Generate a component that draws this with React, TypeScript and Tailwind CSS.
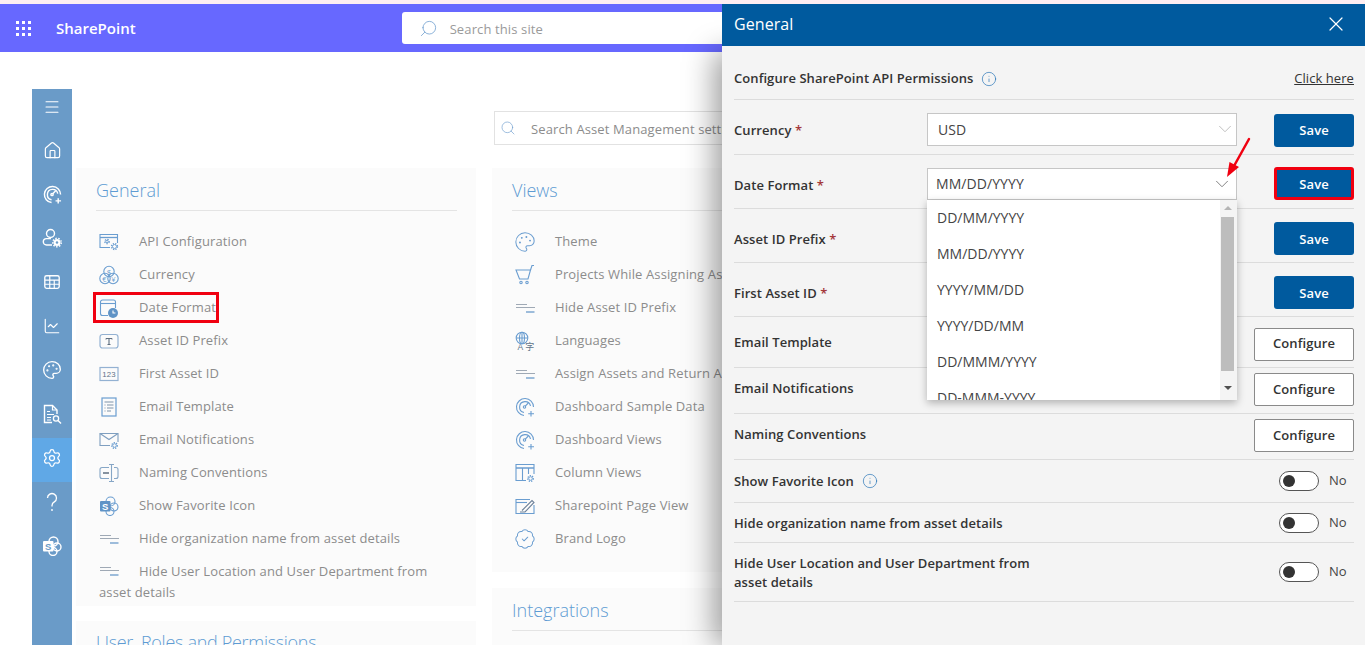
import React from "react";
import { Menu, House, ChartLine, Palette, Settings, BadgeCheck, X, ChevronDown, Search, Info } from "lucide-react";

type P = { className?: string };
const Svg = ({ className, children }: P & { children: React.ReactNode }) => (
  <svg viewBox="0 0 20 20" fill="none" stroke="currentColor" strokeWidth="1.100" className={className}>{children}</svg>
);
const MiniGear = ({ x, y, r = 2.2 }: { x: number; y: number; r?: number }) => (
  <g>
    <circle cx={x} cy={y} r={r + 1} strokeWidth="1.300" strokeDasharray="1.300 1.100" />
    <circle cx={x} cy={y} r={r} strokeWidth="0.900" />
  </g>
);
const IApi = ({ className }: P) => (
  <Svg className={className}>
    <path d="M18.500 11V2.500H1v13h10" /><path d="M1 5.500h17.500" strokeWidth="1.300" />
    <MiniGear x={8} y={9.500} r={1.200} /><MiniGear x={15.500} y={14.500} r={2} />
  </Svg>
);
const ICurrency = ({ className }: P) => (
  <Svg className={className}>
    <circle cx="10" cy="6.500" r="5.200" /><circle cx="6" cy="13.500" r="5.200" /><circle cx="14" cy="13.500" r="5.200" />
    <text x="10" y="9.500" fontSize="8" textAnchor="middle" fill="currentColor" stroke="none">$</text>
    <text x="5.500" y="16.500" fontSize="7.500" textAnchor="middle" fill="currentColor" stroke="none">€</text>
    <text x="14.500" y="16.500" fontSize="7.500" textAnchor="middle" fill="currentColor" stroke="none">¥</text>
  </Svg>
);
const IDate = ({ className }: P) => (
  <Svg className={className}>
    <path d="M9 17.500H3.500a2 2 0 0 1-2-2V4a2 2 0 0 1 2-2h11a2 2 0 0 1 2 2v6" /><path d="M1.500 5.500h15" />
    <circle cx="14" cy="15" r="5" fill="#5f93c6" stroke="none" /><path d="M14 12.500V15h2.400" stroke="#fff" />
  </Svg>
);
const IPrefix = ({ className }: P) => (
  <Svg className={className}>
    <rect x="1" y="3.500" width="18" height="13.500" rx="2.500" strokeWidth="1.200" stroke="#93b1d2" />
    <path d="M7 7.500h6M10 7.500v6M8.500 13.500h3M7 7.500v1M13 7.500v1" stroke="#5f6f80" />
  </Svg>
);
const I123 = ({ className }: P) => (
  <Svg className={className}>
    <rect x="1" y="3.500" width="18" height="13" strokeWidth="1.200" stroke="#93b1d2" />
    <text x="10" y="13.400" fontSize="7.800" textAnchor="middle" fill="#5f7388" stroke="none" fontFamily="Liberation Sans">123</text>
  </Svg>
);
const ITemplate = ({ className }: P) => (
  <Svg className={className}>
    <rect x="3" y="1" width="14" height="18" strokeWidth="1.200" />
    <path d="M5.500 5h9M5.500 8h1M8 8h6.500M5.500 11h1M8 11h6.500M5.500 14h1M8 14h4" stroke="#7f94aa" />
  </Svg>
);
const IMail = ({ className }: P) => (
  <Svg className={className}>
    <path d="M19 12V3.500H1v12h10" stroke="#7f9fc0" /><path d="M1 3.500l9 6 9-6" stroke="#7f9fc0" />
    <MiniGear x={15.500} y={15.500} r={1.800} />
  </Svg>
);
const INaming = ({ className }: P) => (
  <Svg className={className}>
    <path d="M10 4.500H3a2 2 0 0 0-2 2v7a2 2 0 0 0 2 2h7M15 4.500h2a2 2 0 0 1 2 2v7a2 2 0 0 1-2 2h-2" stroke="#86a6c6" />
    <path d="M10 1.500h5M12.500 1.500v17M10 18.500h5" stroke="#86a6c6" /><path d="M4 10h6" strokeWidth="1.500" stroke="#5f6f80" />
  </Svg>
);
const ISp = ({ className }: P) => (
  <Svg className={className}>
    <circle cx="11.500" cy="5.500" r="4.500" /><circle cx="15" cy="11" r="4" /><circle cx="11" cy="15.500" r="4" />
    <rect x="1" y="5" width="10.500" height="10.500" rx="1" fill="#5f93c6" stroke="none" />
    <text x="6.200" y="13.500" fontSize="9.500" fontWeight="700" textAnchor="middle" fill="#fff" stroke="none" fontFamily="Liberation Sans">S</text>
  </Svg>
);
const IHide = ({ className }: P) => (
  <svg viewBox="0 0 20 20" fill="none" strokeWidth="1.200" className={className}>
    <path d="M1 6.500h11M1 9.500h19" stroke="#9fa9b5" /><path d="M11 14h8.500" stroke="#5f93c6" />
  </svg>
);
const IGauge = ({ className, sw = 1.100 }: P & { sw?: number }) => (
  <Svg className={className}>
    <g strokeWidth={sw}>
      <path d="M9 18.500A8.500 8.500 0 1 1 18.500 10" /><path d="M9 15.500A5.500 5.500 0 1 1 15.500 9" />
      <circle cx="9.500" cy="10" r="1.200" /><path d="M10.300 9.200l3-3.200" />
      <path d="M16 14v5.500M13.200 16.700H19" />
    </g>
  </Svg>
);
const ILang = ({ className }: P) => (
  <Svg className={className}>
    <circle cx="7" cy="7" r="5.800" /><ellipse cx="7" cy="7" rx="2.500" ry="5.800" /><path d="M1.200 7h11.600M7 1.200v11.600" />
    <text x="5.500" y="19" fontSize="8.500" textAnchor="middle" fill="#5f7388" stroke="none" fontFamily="Liberation Sans">A</text>
    <text x="14.800" y="18.500" fontSize="9" textAnchor="middle" fill="#5f7388" stroke="none" fontFamily="Noto Sans CJK SC">字</text>
  </Svg>
);
const IColumns = ({ className }: P) => (
  <Svg className={className}>
    <path d="M19 11V1.500H1v16h10" /><path d="M1 5h18" strokeWidth="1.500" /><path d="M7.500 5v12.500M13.500 5v6" />
    <MiniGear x={15.500} y={15.500} r={1.800} />
  </Svg>
);
const IPage = ({ className }: P) => (
  <Svg className={className}>
    <path d="M19 9v8.500H1v-14h14" /><path d="M1 6.500h11" />
    <path d="M7 14.500l10-10 2 2-9 9.500H5" stroke="#6d8199" />
  </Svg>
);
const ICart = ({ className }: P) => (
  <Svg className={className}>
    <path d="M1 5h14.500L13 14H4.500z" /><path d="M15.500 5l1.500-4.500h2" />
    <circle cx="6" cy="17.500" r="1.200" /><circle cx="12" cy="17.500" r="1.200" />
  </Svg>
);
const UserGear = ({ className }: P) => (
  <Svg className={className}>
    <circle cx="8.500" cy="5.500" r="4" strokeWidth="1.400" /><path d="M10 17H4.500a3.200 3.200 0 0 1 0-6.400H9" strokeWidth="1.400" />
    <circle cx="15" cy="14.500" r="3.500" fill="currentColor" stroke="none" /><circle cx="15" cy="14.500" r="4.300" strokeWidth="1.400" strokeDasharray="1.500 1.500" />
    <circle cx="15" cy="14.500" r="1.200" fill="#6a9bc8" stroke="none" />
  </Svg>
);
const DocSearch = ({ className }: P) => (
  <Svg className={className}>
    <path d="M10 18.500H2.500v-17h8l4.500 4.500v4" strokeWidth="1.400" /><path d="M10.500 1.500V6H15" strokeWidth="1.200" />
    <path d="M5 7.500h3M5 10.500h7M5 13.500h4M5 16h4" strokeWidth="1.200" />
    <circle cx="14" cy="14.500" r="2.600" strokeWidth="1.300" /><path d="M16 16.500l3 3" strokeWidth="1.400" />
  </Svg>
);
const SpWhite = ({ className }: P) => (
  <Svg className={className}>
    <circle cx="11.500" cy="5.500" r="4.500" strokeWidth="1.400" /><circle cx="15" cy="11" r="4" strokeWidth="1.400" /><circle cx="11" cy="15.500" r="4" strokeWidth="1.400" />
    <rect x="1" y="5" width="10.500" height="10.500" rx="1" fill="#fff" stroke="none" />
    <text x="6.200" y="13.500" fontSize="9.500" fontWeight="700" textAnchor="middle" fill="#6a9bc8" stroke="none" fontFamily="Liberation Sans">S</text>
  </Svg>
);
const Grid = ({ className }: P) => (
  <Svg className={className}>
    <rect x="2" y="3" width="16" height="14" rx="2" strokeWidth="1.500" />
    <path d="M2 8h16M2 12.500h16M7.500 3v14M12.500 8v9" strokeWidth="1.300" />
  </Svg>
);
const Question = ({ className }: P) => (
  <Svg className={className}><path d="M5.500 6a4.500 4.500 0 1 1 6.800 3.900C10.800 10.800 10 11.500 10 13.500v1" strokeWidth="1.300" /><circle cx="10" cy="18" r="0.900" fill="currentColor" stroke="none" /></Svg>
);

type Ico = (p: P) => React.ReactNode;
const Gauge2: Ico = ({ className }) => <IGauge className={className} />;
const general: [Ico, string][] = [
  [IApi, "API Configuration"], [ICurrency, "Currency"], [IDate, "Date Format"], [IPrefix, "Asset ID Prefix"],
  [I123, "First Asset ID"], [ITemplate, "Email Template"], [IMail, "Email Notifications"], [INaming, "Naming Conventions"],
  [ISp, "Show Favorite Icon"], [IHide, "Hide organization name from asset details"],
];
const views: [Ico, string][] = [
  [({ className }) => <Palette strokeWidth={1.100} className={`${className} scale-110`} />, "Theme"],
  [ICart, "Projects While Assigning Assets"],
  [IHide, "Hide Asset ID Prefix"], [ILang, "Languages"], [IHide, "Assign Assets and Return Assets"],
  [Gauge2, "Dashboard Sample Data"], [Gauge2, "Dashboard Views"], [IColumns, "Column Views"],
  [IPage, "Sharepoint Page View"], [({ className }) => <BadgeCheck strokeWidth={1.100} className={`${className} scale-110`} />, "Brand Logo"],
];

const side: [React.ReactNode, boolean][] = [
  [<House className="h-[19px] w-[19px]" strokeWidth={1.500} />, false],
  [<IGauge className="h-[19px] w-[19px]" sw={1.500} />, false],
  [<UserGear className="h-5 w-5" />, false],
  [<Grid className="h-[18px] w-[18px]" />, false],
  [<ChartLine className="h-[18px] w-[18px]" strokeWidth={1.500} />, false],
  [<Palette className="h-5 w-5" strokeWidth={1.600} />, false],
  [<DocSearch className="h-5 w-5" />, false],
  [<Settings className="h-5 w-5" strokeWidth={1.500} />, true],
  [<Question className="h-5 w-5" />, false],
  [<SpWhite className="h-5 w-5" />, false],
];

const Row = ({ icon: I, text }: { icon: Ico; text: string }) => (
  <div className="flex h-[33px] items-center pl-[3px] whitespace-nowrap">
    <I className="mr-5 h-5 w-5 shrink-0 text-[#6a9dd0]" />
    <span>{text}</span>
  </div>
);

const Title = ({ children }: { children: React.ReactNode }) => (
  <div className="border-b border-[#e4e4e4] pb-[8px] text-[18px] leading-[24px] font-light tracking-normal text-[#5e9bd3]">{children}</div>
);

const Select = ({ value, open, cls }: { value: string; open?: boolean; cls: string }) => (
  <div className={`flex w-[310px] items-center justify-between border border-[#c6c6c6] bg-white text-[14px] font-normal text-[#444] ${cls} ${open ? "pl-2 pr-[3px]" : "pl-[10px]"}`}>
    <span>{value}</span>
    <ChevronDown strokeWidth={1} className={`h-[22px] w-[22px] ${open ? "text-[#777]" : "text-[#bbb]"}`} />
  </div>
);

const Save = ({ red, cls = "" }: { red?: boolean; cls?: string }) => (
  <button className={`ml-auto h-[33px] w-20 rounded-[3px] bg-[#005a9e] pt-[2px] text-[13px] font-semibold text-white ${cls} ${red ? "border-[3px] border-[#f00010]" : ""}`}>Save</button>
);
const Configure = ({ cls = "" }: { cls?: string }) => (
  <button className={`ml-auto h-[33px] w-[100px] rounded-[2px] border border-[#8a8a8a] bg-white text-[13px] font-semibold text-[#333] ${cls}`}>Configure</button>
);
const Toggle = () => (
  <div className="ml-auto flex items-center">
    <div className="flex h-5 w-10 items-center rounded-full border border-[#555] bg-white pl-[3px]"><div className="h-3 w-3 rounded-full bg-[#333]" /></div>
    <span className="ml-[10px] w-[25px] text-[13px] font-normal text-[#444]">No</span>
  </div>
);
const Req = () => <span className="text-[#a4373a]"> *</span>;
const InfoI = () => <Info className="ml-2 h-4 w-4 text-[#1f6fb5]" strokeWidth={1} />;

const PanelRow = ({ h, children }: { h: string; children: React.ReactNode }) => (
  <div className={`flex items-center border-b border-[#dcdcdc] ${h}`}>{children}</div>
);
const Lbl = ({ children }: { children: React.ReactNode }) => <div className="mt-1 w-[193px] shrink-0">{children}</div>;

export default function App() {
  return (
    <div className="relative h-[645px] w-[1365px] overflow-hidden bg-white text-[13px] font-['Open_Sans','Noto_Sans',sans-serif]">
      <div className="h-1 bg-[#fdeef2]" />
      <header className="flex h-12 items-center bg-[#6768ff] text-white">
        <div className="ml-4 grid grid-cols-3 gap-[3px]">
          {Array.from({ length: 9 }).map((_, i) => <div key={i} className="h-[3px] w-[3px] bg-white" />)}
        </div>
        <span className="ml-[25px] text-[15px] font-semibold">SharePoint</span>
        <div className="ml-[266px] flex h-8 w-[330px] items-center rounded-[3px] bg-white text-[13px] tracking-[0.12px] text-[#9a9a9a]">
          <Search className="ml-[17px] h-[19px] w-[19px] -scale-x-100 text-[#6f9fcf]" strokeWidth={1} />
          <span className="ml-[12px] pt-[3px]">Search this site</span>
        </div>
      </header>

      <div className="ml-8 mt-[37px] flex h-[556px]">
        <nav className="w-10 shrink-0 bg-[#6a9bc8] text-white">
          <div className="flex h-[41px] items-start justify-center pt-[9px]"><Menu className="h-[18px] w-[18px]" strokeWidth={1.400} /></div>
          {side.map(([ic, active], i) => (
            <div key={i} className={`flex h-11 items-center justify-center pb-1 ${active ? "bg-[#60a8e6]" : ""}`}>{ic}</div>
          ))}
        </nav>

        <div className="ml-1 mt-[79px] w-[400px] shrink-0 tracking-[0.12px] text-[#8c8c8c]">
          <section className="h-[438px] bg-[#fbfbfb] px-5 pt-[10px] pr-[19px]">
            <Title>General</Title>
            <div className="mt-[14px]">
              {general.map(([I, t]) => <Row key={t} icon={I} text={t} />)}
              <div className="pl-[3px] pt-[6px] leading-[21px]">
                <IHide className="mr-5 inline-block h-5 w-5 align-[-5px]" />
                Hide User Location and User Department from asset details
              </div>
            </div>
          </section>
          <section className="mt-[15px] h-[40px] bg-[#fbfbfb] px-5 pt-[9px]">
            <div className="text-[18px] leading-[24px] font-light tracking-[-0.3px] text-[#5e9bd3]">User, Roles and Permissions</div>
          </section>
        </div>

        <div className="ml-4 w-[420px] shrink-0 tracking-[0.12px] text-[#8c8c8c]">
          <div className="ml-[2px] mt-[22px] flex h-[34px] items-center border border-[#e2e2e2] bg-white text-[13px]">
            <Search className="ml-[5px] h-[16px] w-[16px] text-[#6f9fcf]" strokeWidth={1} />
            <span className="ml-[15px] whitespace-nowrap pt-[3px]">Search Asset Management settings</span>
          </div>
          <section className="mt-[23px] h-[404px] bg-[#fbfbfb] px-5 pt-[10px]">
            <Title>Views</Title>
            <div className="mt-[14px]">
              {views.map(([I, t]) => <Row key={t} icon={I} text={t} />)}
            </div>
          </section>
          <section className="mt-[16px] h-[60px] bg-[#fbfbfb] px-5 pt-[10px]">
            <Title>Integrations</Title>
          </section>
        </div>
      </div>

      <div className="absolute bottom-0 right-0 top-[52px] w-[643px] shadow-[-8px_0_28px_rgba(0,0,0,0.38)]" />
      <aside className="absolute bottom-0 right-0 top-1 w-[643px] bg-[#f4f4f4] text-[13px] font-semibold tracking-[0.07px] text-[#333]">
        <div className="flex h-[42px] items-center justify-between bg-[#005a9e] pb-[2px] pl-3 pr-[17px] text-[16px] font-normal text-white">
          <span>General</span>
          <X className="h-6 w-6" strokeWidth={1.200} />
        </div>
        <div className="px-3 pr-[11px]">
          <PanelRow h="h-[54px] pt-[12px]">
            <span>Configure SharePoint API Permissions</span><InfoI />
            <a className="ml-auto font-normal underline">Click here</a>
          </PanelRow>
          <PanelRow h="h-[55px] pt-1"><Lbl>Currency<Req /></Lbl><Select value="USD" cls="h-[33px]" /><Save cls="mt-[2px]" /></PanelRow>
          <PanelRow h="h-[54px] pt-1"><Lbl>Date Format<Req /></Lbl><Select value="MM/DD/YYYY" open cls="h-[32px]" /><Save red /></PanelRow>
          <PanelRow h="h-[54px] pt-1"><Lbl>Asset ID Prefix<Req /></Lbl><Save cls="mt-[2px]" /></PanelRow>
          <PanelRow h="h-[54px] pt-1"><Lbl>First Asset ID<Req /></Lbl><Save cls="mt-[2px]" /></PanelRow>
          <PanelRow h="h-[51px] pt-[2px]"><span>Email Template</span><Configure cls="mt-[2px]" /></PanelRow>
          <PanelRow h="h-[46px]"><span className="mb-1">Email Notifications</span><Configure cls="mb-[2px]" /></PanelRow>
          <PanelRow h="h-[46px]"><span className="mb-1">Naming Conventions</span><Configure cls="mb-[2px]" /></PanelRow>
          <PanelRow h="h-[43px]"><span className="mt-[2px]">Show Favorite Icon</span><InfoI /><Toggle /></PanelRow>
          <PanelRow h="h-[40px]"><span className="mt-[2px]">Hide organization name from asset details</span><Toggle /></PanelRow>
          <PanelRow h="h-[59px]"><span className="mt-[2px] w-[320px] leading-[19px]">Hide User Location and User Department from asset details</span><Toggle /></PanelRow>
        </div>
      </aside>

      {/* open dropdown list */}
      <div className="absolute left-[927px] top-[200px] flex h-[200px] w-[310px] overflow-hidden bg-white text-[14px] text-[#444] shadow-[0_3px_8px_rgba(0,0,0,0.28)]">
        <div className="-mt-[1px] flex-1 pl-[10px]">
          {["DD/MM/YYYY", "MM/DD/YYYY", "YYYY/MM/DD", "YYYY/DD/MM", "DD/MMM/YYYY", "DD-MMM-YYYY"].map((d) => (
            <div key={d} className="flex h-9 items-center">{d}</div>
          ))}
        </div>
        <div className="flex w-[17px] flex-col items-center bg-[#f4f4f4] pr-[2px]">
          <div className="mt-[6px] h-0 w-0 border-x-[4px] border-b-[4px] border-x-transparent border-b-[#b5b5b5]" />
          <div className="mt-[7px] h-[154px] w-[13px] bg-[#bdbdbd]" />
          <div className="mt-[15px] h-0 w-0 border-x-[4px] border-t-[4px] border-x-transparent border-t-[#505050]" />
        </div>
      </div>

      {/* annotations */}
      <div className="pointer-events-none absolute left-[93px] top-[292px] h-[31px] w-[126px] border-[3px] border-[#f00010]" />
      <svg className="pointer-events-none absolute left-[1222px] top-[136px]" width="32" height="44" viewBox="0 0 32 44">
        <path d="M27 3L12 30" stroke="#f00010" strokeWidth="2.500" strokeLinecap="round" />
        <path d="M5 41l2.500-15 9.500 5z" fill="#f00010" />
      </svg>
    </div>
  );
}
